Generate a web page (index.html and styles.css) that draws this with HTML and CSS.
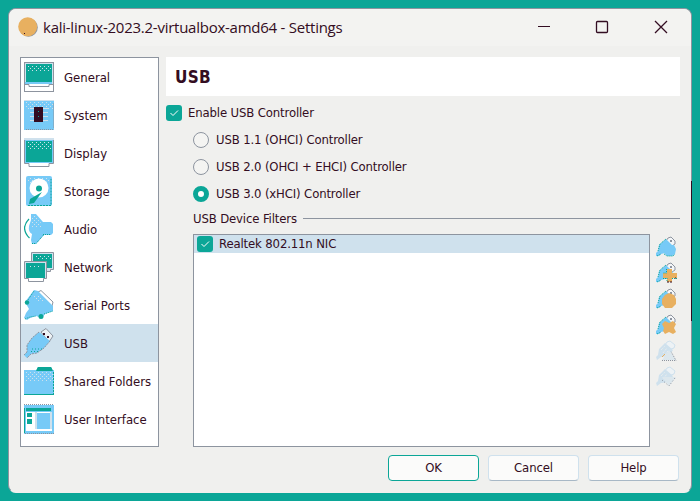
FILE: index.html
```html
<!DOCTYPE html>
<html lang="en">
<head>
<meta charset="utf-8">
<title>kali-linux-2023.2-virtualbox-amd64 - Settings</title>
<link rel="stylesheet" href="styles.css">
</head>
<body>
<svg class="defs" aria-hidden="true">
  <defs>
    <pattern id="dots" width="4" height="4" patternUnits="userSpaceOnUse"><path d="M0 0h1v1H0zM2 2h1v1H2z" fill="#cfe1ed"/></pattern>
    <symbol id="plug" viewBox="0 0 21 21">
      <path d="M10 5 12 2 15 1 19 5 19 8 16 10z" fill="#f4f6f8" stroke="#8d949f"/>
      <path d="M14 4h2v2h-2z" fill="#8d949f"/>
      <path d="M10 3 17 10 13 16 5 18 3 20 0 20 0 17 2 15 3 9z" fill="#77caf7"/>
      <path d="M10 3 4 8 2 15M1 20l4-2" fill="none" stroke="#0ba697" stroke-dasharray="1 1"/>
    </symbol>
    <symbol id="plug-off" viewBox="0 0 21 21">
      <path d="M9 5 11 2 14 1 19 5 18 8 15 9z" fill="#edf2f5" stroke="#cfe1ed"/>
      <path d="M9 3 17 10 13 16 5 17 1 20 0 17 2 15 3 9z" fill="#cfe1ed"/>
      <path d="M5 10l4-4m-2 7l4-5m-2 7l3-4" stroke="#f0f0ee" stroke-dasharray="1 1"/>
    </symbol>
  </defs>
</svg>
<main class="window">
  <header class="titlebar">
    <svg class="appicon" viewBox="0 0 20 20"><circle cx="10.500" cy="10.500" r="9.300" fill="#8d949f"/><circle cx="9.700" cy="9.700" r="9.500" fill="#e8b060"/><path d="M6 16h1v1H6z" fill="#330d22"/></svg>
    <h1>kali-linux-2023.2-virtualbox-amd64 - Settings</h1>
    <svg class="controls" viewBox="0 0 130 14"><path d="M0 6.500h12" stroke="#330d22"/><rect x="58.500" y="1.500" width="11" height="11" rx="1" fill="none" stroke="#330d22" stroke-width="1.300"/><path d="m117 1 12 12m0-12-12 12" stroke="#330d22" stroke-width="1.300"/></svg>
  </header>
  <div class="body">
    <nav class="sidebar">
      <a class="item"><svg viewBox="0 0 30 30"><rect x=".5" y=".5" width="29" height="29" fill="#fff" stroke="#8d949f"/><path d="M1 1h28v21H1z" fill="#cfe1ed"/><path d="M1 20h27v2H1z" fill="#77caf7"/><path d="M2 2h26v18H2z" fill="#0ba697"/><path d="M3 3h24v6H3z" fill="url(#dots)"/><path d="M1 22.500h4v2h20v-2h4" fill="none" stroke="#8d949f"/></svg><span>General</span></a>
      <a class="item"><svg viewBox="0 0 30 30"><path d="M0 0h30v30H0z" fill="#77caf7"/><path d="M1 1h28v9H1z" fill="url(#dots)"/><path d="M0 .5h30" stroke="#cfe1ed"/><path d="M6 8.500h18M6 12.500h18M6 16.500h18M6 20.500h18" stroke="#cfe1ed"/><path d="M10 7h9v15h-9z" fill="#330d22"/><path d="M14 11h1v1h-1zM14 16h1v1h-1z" fill="#0ba697"/><path d="M2 29.500h28m-.5-2V3" fill="none" stroke="#8d949f" stroke-dasharray="1 1"/></svg><span>System</span></a>
      <a class="item"><svg viewBox="0 0 30 30"><path d="M.5.500h29v25H25v3H5v-3H.5z" fill="#fff" stroke="#8d949f"/><path d="M0 0h30v2H0z" fill="#cfe1ed"/><path d="M1 2h28v23H1z" fill="#77caf7"/><path d="M2 3h26v21H2z" fill="#0ba697"/><path d="M3 4h24v7H3z" fill="url(#dots)"/></svg><span>Display</span></a>
      <a class="item"><svg viewBox="0 0 30 30"><rect x="2" width="26" height="30" rx="2" fill="#77caf7"/><path d="M4 1h22v7H4z" fill="url(#dots)"/><circle cx="15" cy="12" r="9.500" fill="#fff"/><circle cx="15" cy="12.500" r="3" fill="#0ba697"/><path d="m18 16-8 11-5 1 1-5z" fill="#0ba697"/><path d="M4 29.500h23V3" fill="none" stroke="#0ba697" stroke-dasharray="2 1"/></svg><span>Storage</span></a>
      <a class="item"><svg viewBox="0 0 30 30"><path d="M7 0h5l7 8h8l2 2v9l-2 2h-7l-8 9H8l-1-4 1-6q-4-2-3-8l2-6z" fill="#77caf7"/><path d="M8 2h3l7 8v3H8z" fill="url(#dots)"/><path d="M5 5q-4 4-4.500 9 .5 6 5 10" fill="none" stroke="#0ba697" stroke-width="1.300"/><path d="M19 20.500h8M8 29.500h4l8-9" fill="none" stroke="#0ba697" stroke-dasharray="1 1"/></svg><span>Audio</span></a>
      <a class="item"><svg viewBox="0 0 30 30"><path d="M7.500.500h22v17h-3v2h-16v-3h-3z" fill="#cfe1ed" stroke="#8d949f"/><path d="M9 2h19v14H9z" fill="#0ba697"/><path d="M11 3h16v4H11z" fill="url(#dots)"/><path d="M.5 9.500h22v17h-3v3h-15v-3h-4z" fill="#fff" stroke="#8d949f"/><path d="M1 10h21v16H1z" fill="#cfe1ed"/><path d="M2 11h19v15H2z" fill="#0ba697"/><path d="M4 13h14v3H4z" fill="url(#dots)"/></svg><span>Network</span></a>
      <a class="item"><svg viewBox="0 0 30 30"><path d="M14 2 17 .5 29 12 28 16 25 15z" fill="#fff" stroke="#8d949f"/><path d="M10 0 14 1 29 16 29 21 21 24 18 28 12 26 6 28 3 30 0 28 2 23 5 19 1 12z" fill="#77caf7"/><path d="m8 5 6 0 6 6-8 1z" fill="url(#dots)"/><circle cx="3" cy="12.500" r="2.200" fill="#0ba697"/><circle cx="17" cy="26.500" r="2.500" fill="#0ba697"/><path d="M1 29l5-2 6-1M4 10l6-9M20 24l9-3" stroke="#0ba697" stroke-dasharray="1 1" fill="none"/></svg><span>Serial Ports</span></a>
      <a class="item selected"><svg viewBox="0 0 30 30"><path d="m17 4 5-3.500 7 7.500-4 6z" fill="#edf2f5" stroke="#8d949f"/><path d="M19 5h2v2h-2zM23 8h2v2h-2z" fill="#330d22"/><path d="M15 4 26 13 20 20 13 25 7 26 3 30 0 27 3 24 3 17 8 10z" fill="#77caf7"/><path d="M15 4 8 10 3 17 3 24 0 27M26 13l-6 7-7 5-6 1-4 4" fill="none" stroke="#8d949f" stroke-dasharray="2 1"/><path d="M8 21h11M7 23.500h8" stroke="#0ba697" stroke-dasharray="1 2"/></svg><span>USB</span></a>
      <a class="item"><svg viewBox="0 0 30 30"><path d="m12 5 2-4h13l2 4z" fill="#0ba697"/><path d="M0 4h30v24H0z" fill="#77caf7"/><path d="m12 5 2-4h13l2 4z" fill="#0ba697"/><path d="M1 5h28v10H1z" fill="url(#dots)"/><path d="M0 28.500h30" stroke="#0ba697"/><path d="M29.500 6v22" stroke="#0ba697" stroke-dasharray="2 1"/></svg><span>Shared Folders</span></a>
      <a class="item"><svg viewBox="0 0 30 30"><path d="M0 1h30v29H0z" fill="#77caf7"/><path d="M2 8h26v19H2z" fill="#fff"/><path d="M2 4h25v3H2zM3 9h5v4H3zM3 15h5v5H3zM0 4h1v25H0z" fill="#0ba697"/><path d="M11 8h2v17h-2zM26 8h2v17h-2z" fill="#cfe1ed"/><path d="M13 9h13v16H13z" fill="#77caf7"/><path d="M0 .5h30M1 29.500h29" stroke="#8d949f" stroke-dasharray="1 1"/></svg><span>User Interface</span></a>
    </nav>
    <section class="content">
      <h2>USB</h2>
      <label class="option enable"><i class="check"><svg viewBox="0 0 16 16"><path d="m4.500 8 2.500 2.500 5-5"/></svg></i><span>Enable USB Controller</span></label>
      <div class="details">
        <label class="option"><i class="radio"></i><span>USB 1.1 (OHCI) Controller</span></label>
        <label class="option"><i class="radio"></i><span>USB 2.0 (OHCI + EHCI) Controller</span></label>
        <label class="option"><i class="radio on"></i><span>USB 3.0 (xHCI) Controller</span></label>
        <div class="legend"><span>USB Device Filters</span></div>
        <div class="filters">
          <div class="list"><div class="row"><i class="check"><svg viewBox="0 0 16 16"><path d="m4.500 8 2.500 2.500 5-5"/></svg></i><span>Realtek 802.11n NIC</span></div></div>
          <div class="tools">
            <svg viewBox="0 0 21 21"><use href="#plug"/><path d="m9 11 4-2h5l2 4-1 5-3 2h-5l-3-3z" fill="#77caf7"/><path d="M8 18l3 2h6l2-2" fill="none" stroke="#0ba697" stroke-dasharray="1 1"/></svg>
            <svg viewBox="0 0 21 21"><use href="#plug"/><path d="M11 7h5v4h5v5h-5v4h-5v-4H7v-5h4z" fill="#e8b060"/><path d="M10.500 7v4H7m4 5v4M7 16.500h4m5 0h5" fill="none" stroke="#0ba697" stroke-dasharray="1 1"/><path d="M11 20h2m1 0h2m3-4h1" stroke="#330d22"/></svg>
            <svg viewBox="0 0 21 21"><use href="#plug"/><path d="m9 7 4-2 5 2 2 4v5l-4 4H9l-3-4v-5z" fill="#e8b060"/></svg>
            <svg viewBox="0 0 21 21"><use href="#plug"/><path d="m9 7 4 2 4-2 3 3-2 4 2 4-3 2-4-2-4 2-2-3 1-3-2-4z" fill="#e8b060"/></svg>
            <svg viewBox="0 0 21 21"><use href="#plug-off"/><path d="m13 10 7 10H6z" fill="#dce7ed"/><path d="M6 20.500h14l-5-9" fill="none" stroke="#8d949f" stroke-dasharray="1 1"/><path d="m6 17 3-3" stroke="#e8b060"/></svg>
            <svg viewBox="0 0 21 21"><use href="#plug-off"/><path d="M6 11h14l-7 9z" fill="#dce7ed"/><path d="m6 14 7 6 6-8" fill="none" stroke="#8d949f" stroke-dasharray="1 2"/></svg>
          </div>
        </div>
      </div>
    </section>
  </div>
  <footer class="buttons"><button class="default">OK</button><button>Cancel</button><button>Help</button></footer>
</main>
</body>
</html>
```
FILE: styles.css
```css
* { box-sizing: border-box; }
body { margin: 0; width: 700px; height: 501px; padding: 8px; background: #0ba697; overflow: hidden; font: 13px/18px "DejaVu Sans Condensed", "DejaVu Sans", sans-serif; font-stretch: condensed; letter-spacing: -0.14px; color: #330d22; }
.defs { position: absolute; width: 0; height: 0; }
.window { position: relative; width: 684px; height: 485px; background: #f0f0ee; border: 1px solid #8d949f; border-bottom-color: #f0f0ee; border-radius: 8px; }
.window::after { content: ""; position: absolute; right: -1px; top: 172px; width: 1px; height: 140px; background: #330d22; }
.titlebar { height: 48px; display: flex; align-items: flex-start; padding: 8px 23px 0 9px; border-radius: 7px 7px 0 0; background: #f3f3f1; box-shadow: inset 0 -11px #f0f0ee; }
.appicon { width: 20px; height: 20px; }
h1 { margin: 0 auto 0 5px; font: 15px/20px "Open Sans", sans-serif; letter-spacing: -0.25px; white-space: nowrap; }
.controls { width: 130px; height: 14px; margin-top: 3px; }
.body { display: flex; gap: 7px; padding: 0 11px; }
.sidebar { width: 139px; height: 390px; border: 1px solid #8d949f; background: #fff; letter-spacing: 0; }
.item { display: flex; align-items: center; gap: 10px; height: 38px; padding-left: 3px; white-space: nowrap; }
.item span { padding-top: 1px; }
.item svg { width: 30px; height: 30px; }
.selected { background: #cfe1ed; }
.content { flex: 1; min-width: 0; }
h2 { margin: 0 0 9px; height: 39px; padding-left: 9px; background: #fff; font: bold 17px/40px "DejaVu Sans Condensed", sans-serif; font-stretch: condensed; letter-spacing: 0.3px; }
.option { display: flex; align-items: center; gap: 7px; height: 16px; white-space: nowrap; }
.enable { gap: 6px; }
.check { width: 16px; height: 16px; border-radius: 3px; background: #0ba697; }
.check svg { display: block; width: 16px; height: 16px; fill: none; stroke: #fff; }
.details { margin: 11px 0 0 27px; }
.details .option { margin-bottom: 11px; }
.radio { width: 16px; height: 16px; border: 1px solid #8d949f; border-radius: 50%; background: #f4f4f2; }
.radio.on { border: 5px solid #0ba697; background: #fff; }
.legend { display: flex; gap: 6px; height: 18px; margin-top: -3px; margin-bottom: 6px; white-space: nowrap; }
.legend::after { content: ""; flex: 1; height: 1px; margin-top: 8px; background: #8d949f; }
.filters { display: flex; gap: 6px; }
.list { width: 457px; height: 213px; border: 1px solid #8d949f; background: #fff; }
.row { display: flex; align-items: center; gap: 6px; height: 18px; padding-left: 3px; background: #cfe1ed; }
.tools { display: flex; flex-direction: column; gap: 5px; padding-top: 2px; }
.tools svg { width: 21px; height: 21px; }
.buttons { display: flex; justify-content: flex-end; gap: 9px; margin: 8px 12px 0 0; }
button { width: 91px; height: 26px; padding: 0; border: 1px solid #cfe1ed; border-bottom-color: #a8b8c6; border-radius: 4px; background: #fbfbfa; font: inherit; letter-spacing: inherit; color: inherit; }
button.default { border-color: #0ba697; }
```
